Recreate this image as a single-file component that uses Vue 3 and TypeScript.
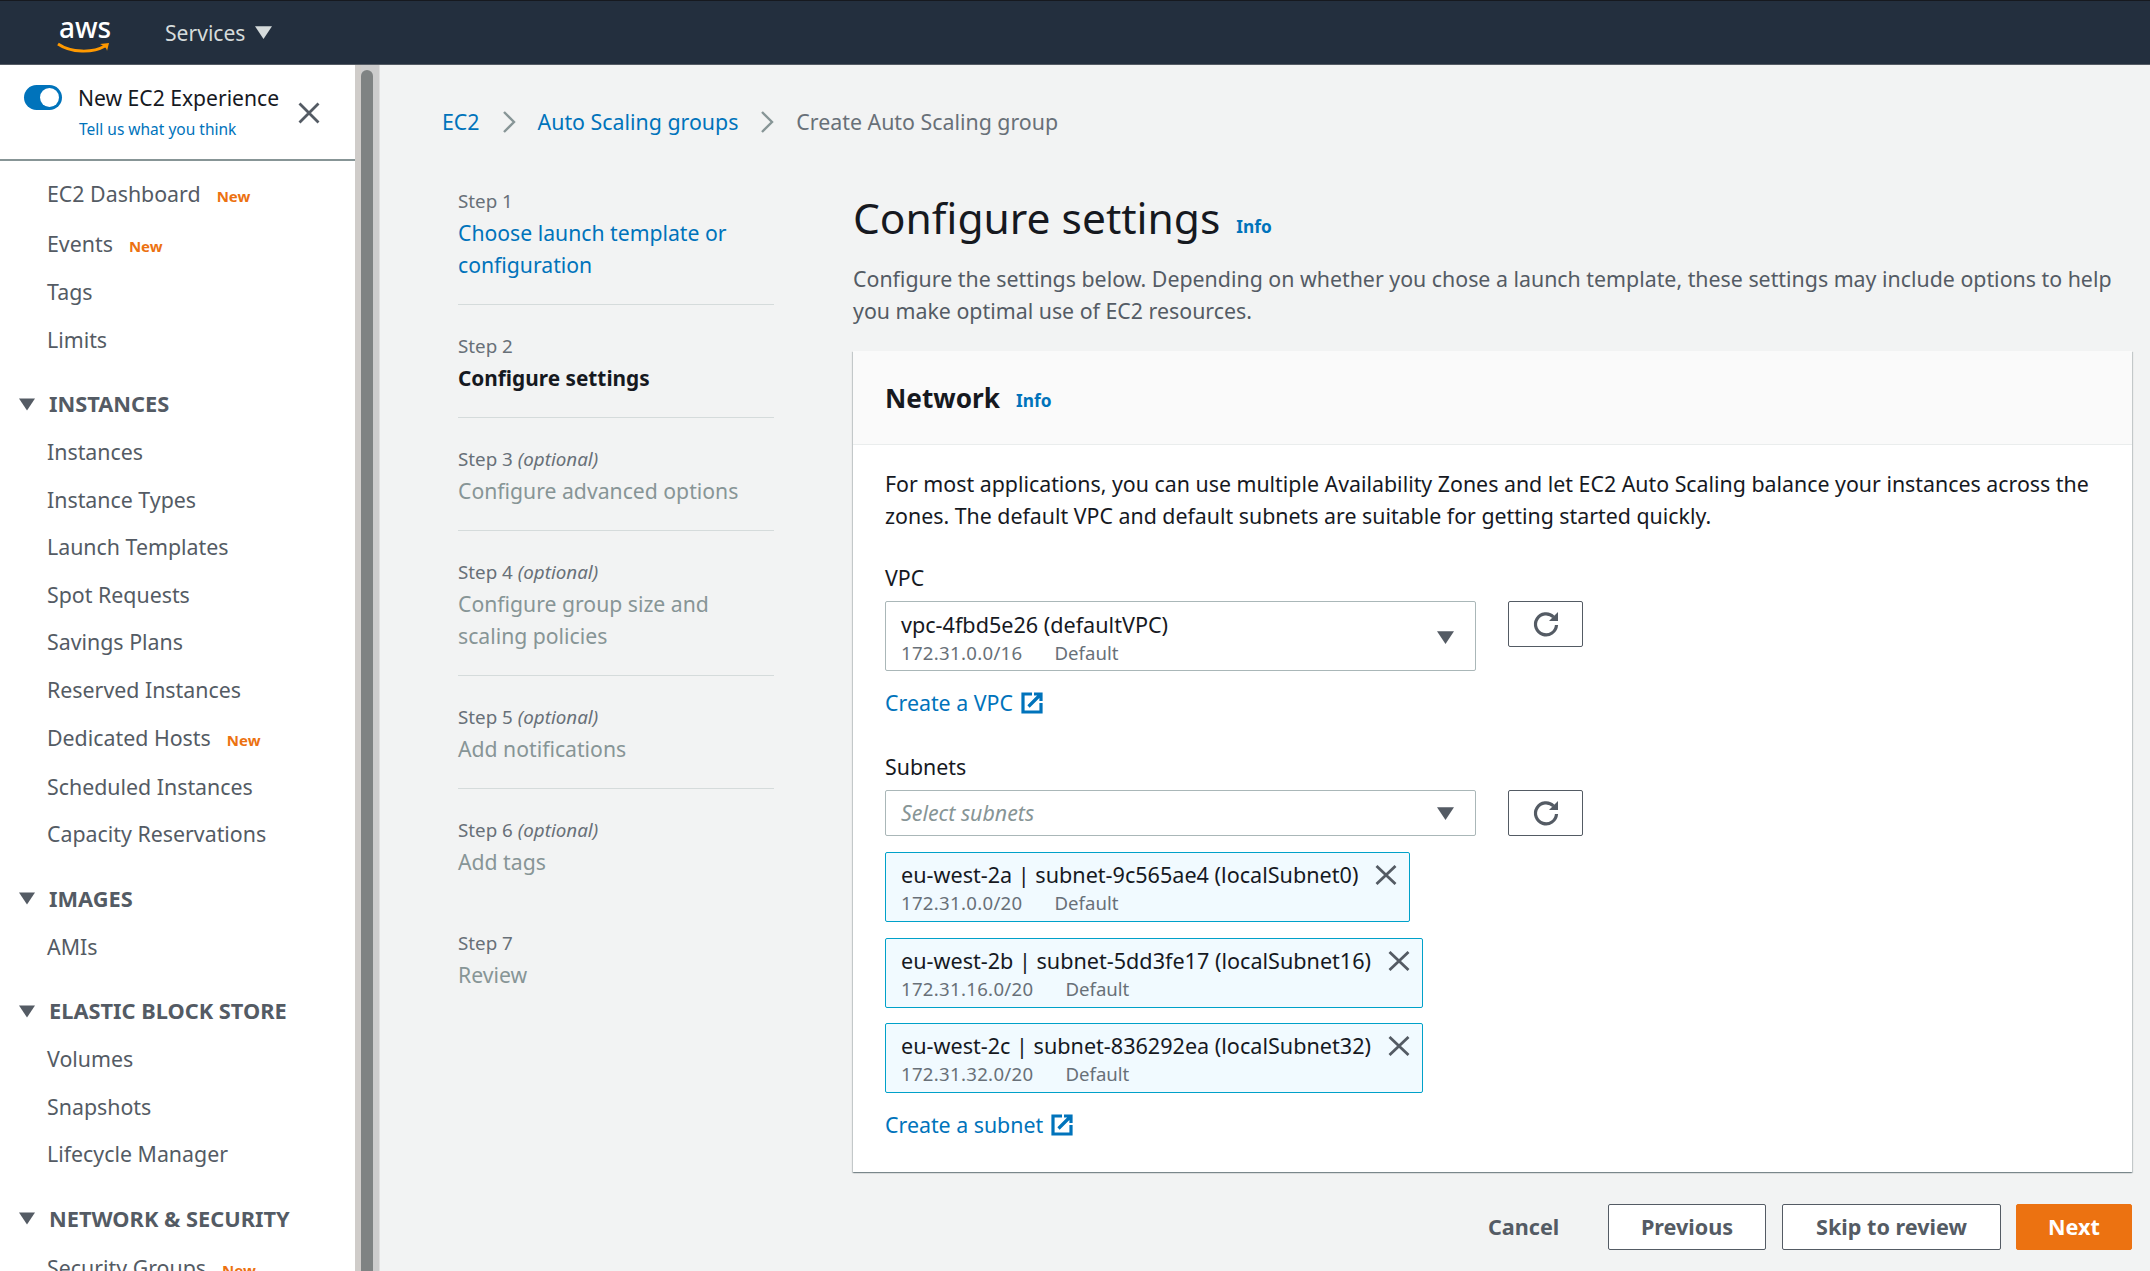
<script setup lang="ts">
interface NavItem { label: string; isNew?: boolean }
interface NavSection { title?: string; items: NavItem[] }
const nav: NavSection[] = [
  { items: [{ label: 'EC2 Dashboard', isNew: true }, { label: 'Events', isNew: true }, { label: 'Tags' }, { label: 'Limits' }] },
  { title: 'INSTANCES', items: [{ label: 'Instances' }, { label: 'Instance Types' }, { label: 'Launch Templates' }, { label: 'Spot Requests' }, { label: 'Savings Plans' }, { label: 'Reserved Instances' }, { label: 'Dedicated Hosts', isNew: true }, { label: 'Scheduled Instances' }, { label: 'Capacity Reservations' }] },
  { title: 'IMAGES', items: [{ label: 'AMIs' }] },
  { title: 'ELASTIC BLOCK STORE', items: [{ label: 'Volumes' }, { label: 'Snapshots' }, { label: 'Lifecycle Manager' }] },
  { title: 'NETWORK & SECURITY', items: [{ label: 'Security Groups', isNew: true }] }
]
interface Step { label: string; optional?: boolean; title: string; state: 'link' | 'current' | 'off' }
const steps: Step[] = [
  { label: 'Step 1', title: 'Choose launch template or configuration', state: 'link' },
  { label: 'Step 2', title: 'Configure settings', state: 'current' },
  { label: 'Step 3', optional: true, title: 'Configure advanced options', state: 'off' },
  { label: 'Step 4', optional: true, title: 'Configure group size and scaling policies', state: 'off' },
  { label: 'Step 5', optional: true, title: 'Add notifications', state: 'off' },
  { label: 'Step 6', optional: true, title: 'Add tags', state: 'off' },
  { label: 'Step 7', title: 'Review', state: 'off' }
]
const subnets = [
  { name: 'eu-west-2a | subnet-9c565ae4 (localSubnet0)', cidr: '172.31.0.0/20' },
  { name: 'eu-west-2b | subnet-5dd3fe17 (localSubnet16)', cidr: '172.31.16.0/20' },
  { name: 'eu-west-2c | subnet-836292ea (localSubnet32)', cidr: '172.31.32.0/20' }
]
</script>

<template>
  <div class="app">
    <header class="topbar">
      <div class="logo">
        <span class="logo-text">aws</span>
        <svg class="smile" viewBox="0 0 54 12" width="54" height="12">
          <path d="M1 2 C14 11 36 11 48 4" fill="none" stroke="#f90" stroke-width="2.8" />
          <path d="M43 2 L52 1 L50 9 C50 6 47 4 43 2Z" fill="#f90" />
        </svg>
      </div>
      <span class="services">Services</span>
      <svg class="services-caret" viewBox="0 0 16 12" width="17" height="13"><path d="M0 0H16L8 12Z" fill="#d5dbdb" /></svg>
    </header>

    <div class="shell">
      <aside class="sidebar">
        <div class="experience">
          <span class="toggle"><span class="knob"></span></span>
          <div class="exp-text">
            <div class="exp-title">New EC2 Experience</div>
            <a class="exp-link">Tell us what you think</a>
          </div>
          <svg class="exp-close" viewBox="0 0 22 22" width="22" height="22"><path d="M1.5 1.5L20.5 20.5M20.5 1.5L1.5 20.5" stroke="#545b64" stroke-width="2.8" fill="none" /></svg>
        </div>
        <nav class="nav">
          <section v-for="(s, i) in nav" :key="i" class="nav-section">
            <div v-if="s.title" class="nav-head">
              <svg viewBox="0 0 16 12" width="16" height="13"><path d="M0 0H16L8 12Z" fill="#545b64" /></svg>
              <span>{{ s.title }}</span>
            </div>
            <div v-for="it in s.items" :key="it.label" class="nav-item" :class="{ tagged: it.isNew }">
              <span>{{ it.label }}</span>
              <span v-if="it.isNew" class="new">New</span>
            </div>
          </section>
        </nav>
      </aside>
      <div class="scroller"><div class="thumb"></div></div>

      <main class="main">
        <div class="crumbs">
          <a>EC2</a>
          <svg viewBox="0 0 14 24" width="14" height="24"><path d="M2 2L12 12L2 22" fill="none" stroke="#879596" stroke-width="2.4" /></svg>
          <a>Auto Scaling groups</a>
          <svg viewBox="0 0 14 24" width="14" height="24"><path d="M2 2L12 12L2 22" fill="none" stroke="#879596" stroke-width="2.4" /></svg>
          <span>Create Auto Scaling group</span>
        </div>
        <div class="columns">
          <ol class="steps">
            <li v-for="s in steps" :key="s.label" class="step">
              <div class="step-label">{{ s.label }}<i v-if="s.optional"> (optional)</i></div>
              <div class="step-title" :class="s.state">{{ s.title }}</div>
            </li>
          </ol>

          <div class="content">
            <div class="page-head">
              <h1>Configure settings</h1>
              <a class="info">Info</a>
            </div>
            <p class="intro">Configure the settings below. Depending on whether you chose a launch template, these settings may include options to help you make optimal use of EC2 resources.</p>

            <section class="card">
              <div class="card-head">
                <h2>Network</h2>
                <a class="info">Info</a>
              </div>
              <div class="card-body">
                <p class="lead">For most applications, you can use multiple Availability Zones and let EC2 Auto Scaling balance your instances across the zones. The default VPC and default subnets are suitable for getting started quickly.</p>

                <div class="label vpc-label">VPC</div>
                <div class="field-row">
                  <div class="select tall">
                    <div>
                      <div class="opt-name">vpc-4fbd5e26 (defaultVPC)</div>
                      <div class="opt-meta"><span class="cidr">172.31.0.0/16</span><span>Default</span></div>
                    </div>
                    <svg viewBox="0 0 16 12" width="17" height="13"><path d="M0 0H16L8 12Z" fill="#545b64" /></svg>
                  </div>
                  <button class="refresh">
                    <svg viewBox="0 0 28 28" width="28" height="28"><path d="M21.5 7A10.5 10.5 0 1 0 24.5 15" fill="none" stroke="#545b64" stroke-width="3.2" /><path d="M26 2V11H17Z" fill="#545b64" /></svg>
                  </button>
                </div>
                <a class="ext">Create a VPC
                  <svg viewBox="0 0 22 22" width="22" height="22"><path d="M11 2H2V20H20V11" fill="none" stroke="#0073bb" stroke-width="3.2" /><path d="M13 2H20V9M20 2L7.5 14.5" fill="none" stroke="#0073bb" stroke-width="3.2" /></svg>
                </a>

                <div class="label subnets-label">Subnets</div>
                <div class="field-row">
                  <div class="select short">
                    <span class="placeholder">Select subnets</span>
                    <svg viewBox="0 0 16 12" width="17" height="13"><path d="M0 0H16L8 12Z" fill="#545b64" /></svg>
                  </div>
                  <button class="refresh">
                    <svg viewBox="0 0 28 28" width="28" height="28"><path d="M21.5 7A10.5 10.5 0 1 0 24.5 15" fill="none" stroke="#545b64" stroke-width="3.2" /><path d="M26 2V11H17Z" fill="#545b64" /></svg>
                  </button>
                </div>
                <div class="tokens">
                  <div v-for="t in subnets" :key="t.cidr" class="token">
                    <div>
                      <div class="opt-name">{{ t.name }}</div>
                      <div class="opt-meta"><span class="cidr">{{ t.cidr }}</span><span>Default</span></div>
                    </div>
                    <svg class="token-x" viewBox="0 0 22 20" width="22" height="20"><path d="M1.5 1L20.5 19M20.5 1L1.5 19" stroke="#545b64" stroke-width="2.8" fill="none" /></svg>
                  </div>
                </div>
                <a class="ext subnet-link">Create a subnet
                  <svg viewBox="0 0 22 22" width="22" height="22"><path d="M11 2H2V20H20V11" fill="none" stroke="#0073bb" stroke-width="3.2" /><path d="M13 2H20V9M20 2L7.5 14.5" fill="none" stroke="#0073bb" stroke-width="3.2" /></svg>
                </a>
              </div>
            </section>

            <div class="actions">
              <button class="btn plain">Cancel</button>
              <button class="btn prev">Previous</button>
              <button class="btn skip">Skip to review</button>
              <button class="btn primary">Next</button>
            </div>
          </div>
        </div>
      </main>
    </div>
  </div>
</template>

<style>
html, body { margin: 0; background: #f2f3f3; }
</style>

<style scoped>
.app {
  --fs: 21.35px;
  width: 2150px;
  height: 1271px;
  overflow: hidden;
  display: flex;
  flex-direction: column;
  font-family: "Noto Sans", "Liberation Sans", sans-serif;
  font-size: var(--fs);
  line-height: 32px;
  color: #16191f;
  background: #f2f3f3;
}
a { color: #0073bb; }
p, h1, h2, ol { margin: 0; padding: 0; }

.topbar {
  flex: none;
  background: #232f3e;
  border-bottom: 1px solid #545b64;
  border-top: 1px solid #16191f;
  box-sizing: border-box;
  height: 65px;
  display: flex;
  align-items: center;
  padding-left: 57px;
  position: relative;
}
.logo { width: 108px; height: 48px; position: relative; flex: none; }
.logo-text {
  position: absolute;
  left: 2px;
  top: 3px;
  color: #fff;
  font-size: 28px;
  line-height: 30px;
  font-weight: 500;
}
.smile { position: absolute; left: 0; top: 33px; }
.services { color: #d5dbdb; margin-right: 10px; font-size: 21.1px; }

.shell { flex: 1; display: flex; min-height: 0; }
.sidebar { width: 355px; flex: none; background: #fff; overflow: hidden; }
.experience {
  height: 96px;
  box-sizing: border-box;
  border-bottom: 2px solid #879596;
  display: flex;
  padding: 20px 0 0 24px;
  position: relative;
}
.toggle {
  width: 38px;
  height: 25px;
  border-radius: 13px;
  background: #0073bb;
  position: relative;
  flex: none;
}
.knob {
  position: absolute;
  width: 19px;
  height: 19px;
  border-radius: 50%;
  background: #fff;
  top: 3px;
  right: 3px;
}
.exp-text { margin-left: 16px; width: 220px; }
.exp-title { line-height: 26px; white-space: nowrap; font-size: 21.1px; }
.exp-link { display: block; font-size: 15.5px; line-height: 26px; margin-top: 5px; margin-left: 1px; white-space: nowrap; }
.exp-close { position: absolute; left: 298px; top: 37px; }

.nav { padding-top: 8.5px; color: #545b64; }
.nav-section + .nav-section { margin-top: 16.5px; }
.nav-head {
  height: 48.5px;
  display: flex;
  align-items: center;
  font-weight: 700;
  font-size: 21.8px;
  padding-left: 19px;
  white-space: nowrap;
}
.nav-head span { margin-left: 14px; }
.nav-item {
  height: 47.5px;
  display: flex;
  align-items: center;
  padding-left: 47px;
  white-space: nowrap;
}
.nav-item.tagged { height: 49.5px; }
.new { color: #ec7211; font-weight: 700; font-size: 15px; margin-left: 16px; position: relative; top: 2px; }

.scroller {
  width: 25px;
  flex: none;
  box-sizing: border-box;
  background: linear-gradient(to right, #cfccc9 0 6px, #cdcdcd 6px 25px);
  position: relative;
  border-right: 1px solid #e0e0e0;
  padding: 5px 6px 0;
}
.thumb {
  height: 100%;
  border-radius: 6px 6px 0 0;
  background: #7f8383;
}

.main { flex: 1; min-width: 0; padding: 41px 18px 0 62px; }
.crumbs { display: flex; align-items: center; height: 32px; color: #687078; white-space: nowrap; }
.crumbs svg { margin: 0 22px; }
.columns { display: flex; margin-top: 50px; }
.steps { width: 316px; margin-left: 16px; flex: none; list-style: none; }
.step { padding: 28px 0 23px; border-top: 1px solid #d5dbdb; }
.step:first-child { padding: 0 0 23px; border-top: 0; }
.step:last-child { border-top: 1px solid transparent; }
.step-label { font-size: 18.8px; line-height: 26px; color: #687078; }
.step-title { line-height: 32px; margin-top: 3px; font-size: 21.2px; }
.step-title.link { color: #0073bb; }
.step-title.current { font-weight: 700; font-size: 20.8px; }
.step-title.off { color: #879596; }

.content { margin-left: 79px; flex: 1; min-width: 0; }
.page-head { height: 60px; display: flex; align-items: center; }
h1 { font-size: 42.5px; font-weight: 400; line-height: 60px; }
.info { font-size: 17.3px; font-weight: 700; margin-left: 16px; line-height: 22px; position: relative; top: 9px; }
.intro { margin-top: 15px; color: #545b64; }

.card {
  margin-top: 24px;
  background: #fff;
  height: 821px;
  box-shadow: 0 1px 1px 0 rgba(0, 28, 36, .3), 1px 1px 1px 0 rgba(0, 28, 36, .15), -1px 1px 1px 0 rgba(0, 28, 36, .15);
}
.card-head {
  height: 94px;
  box-sizing: border-box;
  background: #fafafa;
  border-bottom: 1px solid #eaeded;
  display: flex;
  align-items: center;
  padding-left: 32px;
}
h2 { font-size: 26.2px; font-weight: 700; }
.card-head .info { top: 3px; }
.card-body { padding: 23px 32px 0; }
.label { line-height: 32px; }
.vpc-label { margin-top: 30px; }
.subnets-label { margin-top: 32px; }
.field-row { display: flex; align-items: flex-start; margin-top: 7px; }
.select {
  width: 591px;
  box-sizing: border-box;
  border: 1px solid #aab7b8;
  border-radius: 2px;
  background: #fff;
  display: flex;
  align-items: center;
  justify-content: space-between;
  padding: 0 21px 0 15px;
}
.tall { height: 70px; padding-top: 2px; }
.short { height: 46px; }
.placeholder { color: #879596; font-style: italic; }
.opt-name { line-height: 32px; white-space: nowrap; font-size: 21.6px; }
.opt-meta { font-size: 18.6px; line-height: 26px; margin-top: -1px; color: #687078; display: flex; gap: 32px; white-space: nowrap; }
.cidr { letter-spacing: .3px; }
.refresh {
  width: 75px;
  height: 46px;
  margin-left: 32px;
  box-sizing: border-box;
  border: 1px solid #545b64;
  border-radius: 2px;
  background: #fff;
  padding: 0;
  display: flex;
  align-items: center;
  justify-content: center;
}
.ext { display: flex; align-items: center; gap: 8px; line-height: 32px; margin-top: 16px; white-space: nowrap; }
.tokens { margin-top: 16px; display: flex; flex-direction: column; align-items: flex-start; gap: 15.5px; }
.token {
  height: 70px;
  box-sizing: border-box;
  background: #f1faff;
  border: 1px solid #00a1c9;
  border-radius: 2px;
  display: flex;
  align-items: flex-start;
  padding: 6px 12px 0 15px;
}
.token-x { margin: 6px 0 0 17px; flex: none; }
.subnet-link { margin-top: 16px; }

.actions { display: flex; align-items: center; justify-content: flex-end; margin-top: 32px; }
.btn {
  height: 46px;
  box-sizing: border-box;
  font: 700 21.6px/26px "Noto Sans", "Liberation Sans", sans-serif;
  border-radius: 2px;
  color: #545b64;
  background: #fff;
  border: 1px solid #545b64;
  padding: 0;
}
.plain { background: transparent; border-color: transparent; width: 69px; margin-right: 52px; }
.prev { width: 158px; margin-right: 16px; }
.skip { width: 219px; margin-right: 15px; }
.primary { width: 116px; background: #ec7211; border-color: #ec7211; color: #fff; }
</style>
